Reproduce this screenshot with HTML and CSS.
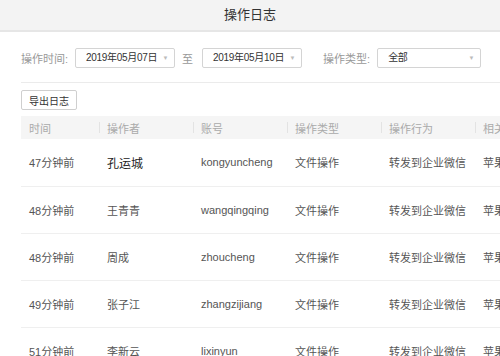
FILE: index.html
```html
<!DOCTYPE html>
<html lang="zh-CN">
<head>
    <meta charset="UTF-8">
    <meta name="viewport" content="width=device-width, initial-scale=1.0">
    <title>操作日志</title>
    <link rel="stylesheet" href="styles.css">
</head>
<body>
    <div class="header">操作日志</div>

    <div class="page">
        <div class="filters">
            <span class="label">操作时间:</span>
            <div class="select date">2019年05月07日<span class="arrow">▼</span></div>
            <span class="to">至</span>
            <div class="select date">2019年05月10日<span class="arrow">▼</span></div>
            <span class="label type-label">操作类型:</span>
            <div class="select type">全部<span class="arrow">▼</span></div>
        </div>

        <div class="toolbar">
            <button class="export-btn">导出日志</button>
        </div>

        <table class="log-table">
            <colgroup>
                <col class="c-time">
                <col class="c-mid">
                <col class="c-mid">
                <col class="c-mid">
                <col class="c-mid">
                <col class="c-mid">
            </colgroup>
            <thead>
                <tr>
                    <th>时间</th>
                    <th>操作者</th>
                    <th>账号</th>
                    <th>操作类型</th>
                    <th>操作行为</th>
                    <th>相关</th>
                </tr>
            </thead>
            <tbody>
                <tr>
                    <td>47分钟前</td>
                    <td class="strong">孔运城</td>
                    <td>kongyuncheng</td>
                    <td>文件操作</td>
                    <td>转发到企业微信</td>
                    <td>苹果</td>
                </tr>
                <tr>
                    <td>48分钟前</td>
                    <td>王青青</td>
                    <td>wangqingqing</td>
                    <td>文件操作</td>
                    <td>转发到企业微信</td>
                    <td>苹果</td>
                </tr>
                <tr>
                    <td>48分钟前</td>
                    <td>周成</td>
                    <td>zhoucheng</td>
                    <td>文件操作</td>
                    <td>转发到企业微信</td>
                    <td>苹果</td>
                </tr>
                <tr>
                    <td>49分钟前</td>
                    <td>张子江</td>
                    <td>zhangzijiang</td>
                    <td>文件操作</td>
                    <td>转发到企业微信</td>
                    <td>苹果</td>
                </tr>
                <tr>
                    <td>51分钟前</td>
                    <td>李新云</td>
                    <td>lixinyun</td>
                    <td>文件操作</td>
                    <td>转发到企业微信</td>
                    <td>苹果</td>
                </tr>
            </tbody>
        </table>
    </div>
</body>
</html>
```

FILE: styles.css
```css
* {
    margin: 0;
    padding: 0;
    box-sizing: border-box;
}

body {
    font-family: 'Liberation Sans', 'Noto Sans CJK SC', sans-serif;
    background: #fff;
    color: #333;
    overflow: hidden;
}

.header {
    height: 32px;
    line-height: 30px;
    text-align: center;
    font-size: 13px;
    color: #333;
    background: #f3f3f3;
    border-bottom: 2px solid #e6e6e6;
}

.page {
    padding-left: 21px;
}

.filters {
    display: flex;
    align-items: center;
    height: 51px;
    padding-top: 1px;
    border-bottom: 1px solid #ebebeb;
}

.label {
    font-size: 11px;
    color: #999;
    margin-right: 7px;
}

.type-label {
    margin-left: 21px;
}

.to {
    font-size: 11px;
    color: #999;
    margin: 0 9px 0 7px;
}

.select {
    position: relative;
    height: 20px;
    line-height: 18px;
    border: 1px solid #d4d4d4;
    border-radius: 2px;
    font-size: 10px;
    letter-spacing: -0.3px;
    color: #333;
    padding-left: 10px;
    background: #fff;
}

.select.date {
    width: 100px;
}

.select.type {
    width: 104px;
}

.arrow {
    position: absolute;
    right: 6px;
    top: 0;
    font-size: 6px;
    color: #bbb;
}

.toolbar {
    padding: 7px 0 6px;
}

.export-btn {
    display: block;
    width: 56px;
    height: 20px;
    font-family: inherit;
    font-size: 10px;
    color: #333;
    background: #fff;
    border: 1px solid #cfcfcf;
    border-radius: 2px;
}

.log-table {
    border-collapse: collapse;
    table-layout: fixed;
    width: 548px;
    font-size: 11px;
}

.c-time {
    width: 78px;
}

.c-mid {
    width: 94px;
}

.log-table th {
    height: 23px;
    background: #f5f5f5;
    color: #aaa;
    font-weight: normal;
    text-align: left;
    padding-left: 8px;
    position: relative;
    white-space: nowrap;
    overflow: hidden;
}

.log-table th + th::before {
    content: '';
    position: absolute;
    left: 0;
    top: 6px;
    bottom: 6px;
    border-left: 1px solid #e3e3e3;
}

.log-table td {
    height: 47px;
    padding-left: 8px;
    color: #555;
    border-bottom: 1px solid #efefef;
    white-space: nowrap;
    overflow: hidden;
}

.log-table td.strong {
    color: #222;
    font-size: 12px;
}
```
